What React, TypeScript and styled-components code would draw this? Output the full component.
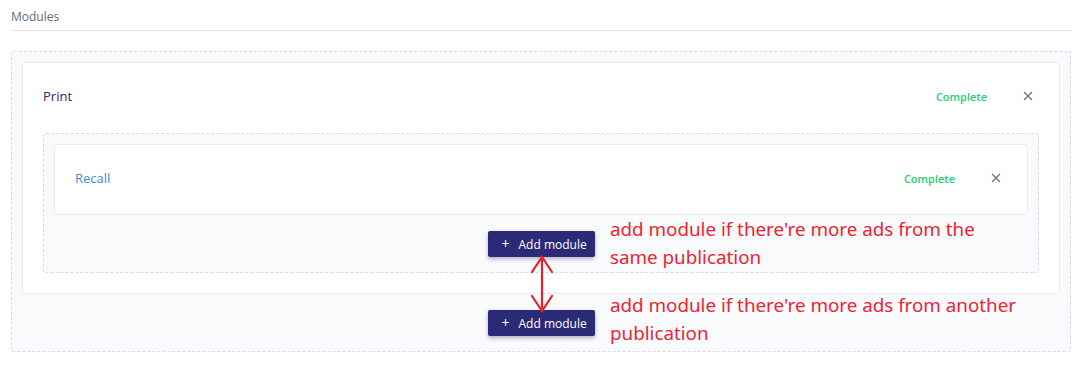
import styled, { createGlobalStyle } from "styled-components";

const GlobalStyle = createGlobalStyle`
    body {
        margin: 0;
        background: #ffffff;
        font-family: "Open Sans", "Noto Sans", sans-serif;
    }
`;

const Page = styled.div`
    position: relative;
    padding: 0 11px;
    width: 1082px;
    height: 376px;
    box-sizing: border-box;
`;

const SectionTitle = styled.div`
    font-size: 12px;
    color: #666c76;
    height: 31px;
    line-height: 34px;
    border-bottom: 1px solid #dfe2e8;
    box-sizing: border-box;
`;

const DashedBox = styled.div<{ $top?: number }>`
    margin-top: ${(p) => p.$top ?? 0}px;
    border: 1px dashed #d9dde3;
    border-radius: 3px;
    background: #f9fafc;
    padding: 10px 10px 0;
`;

const Card = styled.div<{ $padTop: number; $padBottom: number }>`
    background: #ffffff;
    border: 1px solid #e8ecf1;
    border-radius: 3px;
    padding: ${(p) => p.$padTop}px 20px ${(p) => p.$padBottom}px;
`;

const CardHeader = styled.div`
    display: flex;
    align-items: center;
    height: 26px;
`;

const Title = styled.div<{ $color: string }>`
    flex: 1;
    font-size: 13px;
    color: ${(p) => p.$color};
`;

const Status = styled.span`
    font-size: 11px;
    font-weight: 600;
    color: #2dcc70;
`;

const Close = styled.button`
    width: 16px;
    height: 16px;
    margin-left: 33px;
    margin-right: 3px;
    padding: 0;
    border: none;
    background: none;
    display: flex;
    align-items: center;
    justify-content: center;
    color: #6d7280;
    cursor: pointer;
`;

const ButtonRow = styled.div`
    display: flex;
    justify-content: center;
    padding: 16px 0 15px;
`;

const AddButton = styled.button`
    display: flex;
    align-items: center;
    gap: 9px;
    height: 26px;
    width: 107px;
    padding: 0 0 0 14px;
    border: none;
    border-radius: 2px;
    background: #2b2a76;
    color: #ffffff;
    font-family: "Open Sans", "Noto Sans", sans-serif;
    font-size: 12px;
    box-shadow: 0 2px 4px rgba(30, 30, 80, 0.35);
    cursor: pointer;
`;

const Plus = styled.span`
    font-size: 14px;
    line-height: 1;
`;

const Note = styled.div<{ $top: number }>`
    position: absolute;
    left: 610px;
    top: ${(p) => p.$top}px;
    width: 412px;
    font-family: "Noto Sans", "Open Sans", sans-serif;
    font-size: 18.8px;
    line-height: 28px;
    color: #ec2433;
`;

const Arrow = styled.svg`
    position: absolute;
    left: 528px;
    top: 255px;
`;

function CloseIcon() {
    return (
        <svg width="10" height="10" viewBox="0 0 10 10">
            <path d="M1 1 L9 9 M9 1 L1 9" stroke="currentColor" strokeWidth="1.3" />
        </svg>
    );
}

function AddModule() {
    return (
        <ButtonRow>
            <AddButton>
                <Plus>+</Plus>
                <span>Add module</span>
            </AddButton>
        </ButtonRow>
    );
}

function App() {
    return (
        <Page>
            <GlobalStyle />
            <SectionTitle>Modules</SectionTitle>
            <DashedBox $top={20}>
                <Card $padTop={20} $padBottom={20}>
                    <CardHeader>
                        <Title $color="#27286e">Print</Title>
                        <Status>Complete</Status>
                        <Close><CloseIcon /></Close>
                    </CardHeader>
                    <DashedBox $top={24}>
                        <Card $padTop={20} $padBottom={23}>
                            <CardHeader>
                                <Title $color="#3f8fdb">Recall</Title>
                                <Status>Complete</Status>
                                <Close><CloseIcon /></Close>
                            </CardHeader>
                        </Card>
                        <AddModule />
                    </DashedBox>
                </Card>
                <AddModule />
            </DashedBox>
            <Note $top={215}>add module if there're more ads from the same publication</Note>
            <Note $top={291}>add module if there're more ads from another publication</Note>
            <Arrow width="28" height="58" viewBox="0 0 28 58">
                <g stroke="#e8202b" strokeWidth="2.2" fill="none" strokeLinecap="round">
                    <path d="M14 2 L14 56" />
                    <path d="M4 17 L14 2 L24 17" />
                    <path d="M4 41 L14 56 L24 41" />
                </g>
            </Arrow>
        </Page>
    );
}

export default App;
